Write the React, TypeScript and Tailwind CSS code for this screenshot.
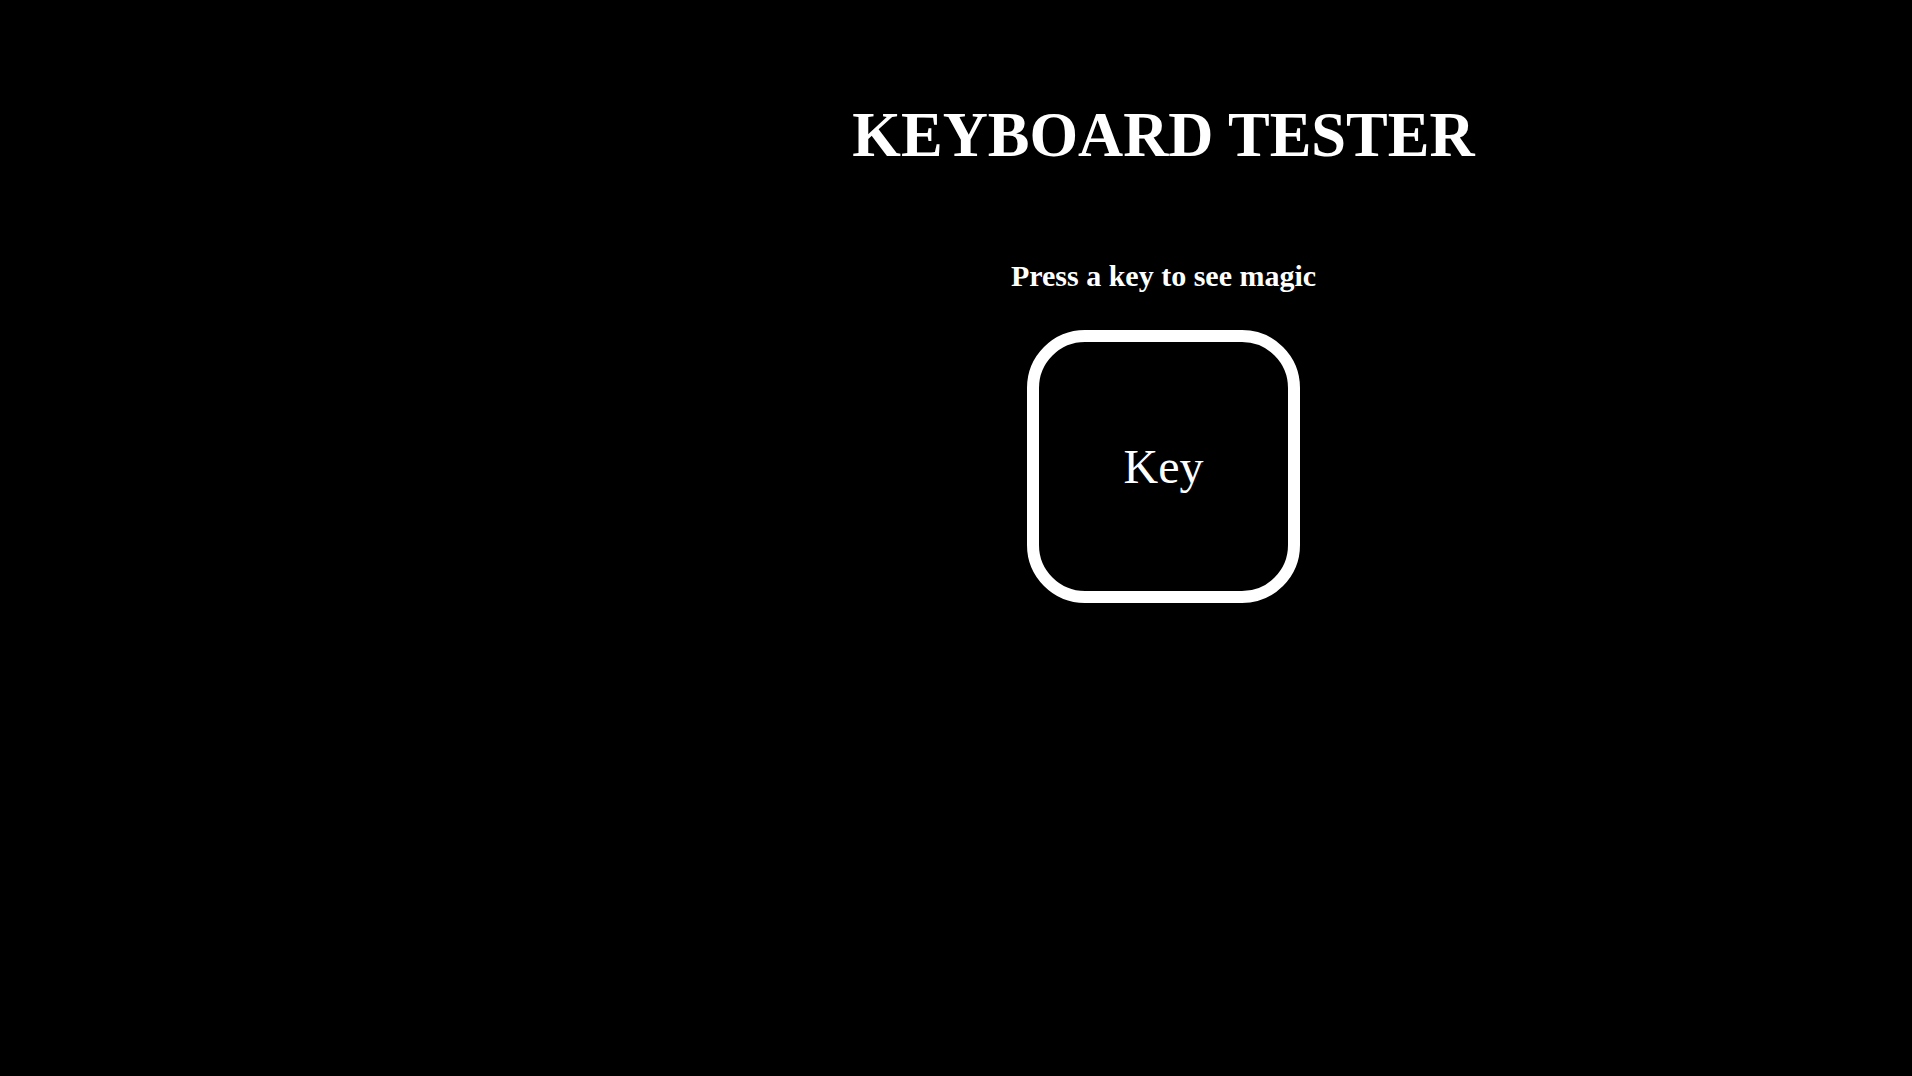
export default function App() {
  return (
    <div className="min-h-screen w-full bg-black pl-[415px] text-white [font-family:'Liberation_Serif','Times_New_Roman',serif]">
      <div className="flex flex-col items-center">
        <h1 className="mt-[104px] text-[62.5px] font-bold leading-none">KEYBOARD TESTER</h1>
        <h3 className="mt-[94px] text-[30px] font-bold leading-none">Press a key to see magic</h3>
        <div className="mt-[39px] box-border flex h-[273px] w-[273px] items-center justify-center rounded-[58px] border-[12px] border-white">
          <span className="pt-[2px] text-[48px] leading-none">Key</span>
        </div>
      </div>
    </div>
  );
}
